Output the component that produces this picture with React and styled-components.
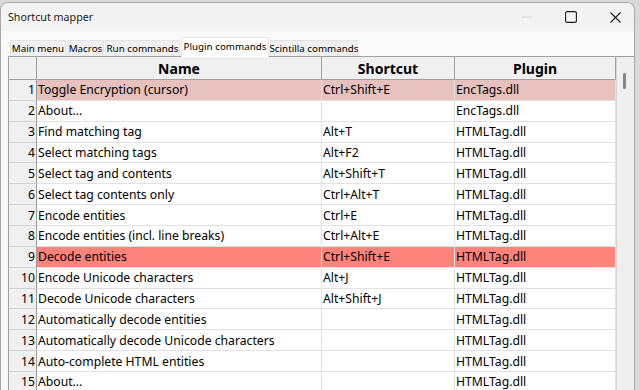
import React from "react";
import styled, { createGlobalStyle } from "styled-components";

const Global = createGlobalStyle`
  html, body { margin: 0; padding: 0; }
  body {
    background: #d9d9d9;
    font-family: "Noto Sans", "Open Sans", sans-serif;
    width: 640px; height: 390px; overflow: hidden;
  }
`;

const Window = styled.div`
  margin: 2px 5px 0 0;
  height: 400px;
  background: #f9f9f9;
  border: 1px solid #a8a8a8;
  border-bottom: none;
  border-radius: 8px 8px 0 0;
  display: flex;
  flex-direction: column;
  overflow: hidden;
`;

const TitleBar = styled.div`
  height: 28px;
  background: #f3f3f3;
  display: flex;
  align-items: center;
  padding: 0 13px 0 7px;
`;

const Title = styled.div`
  flex: 1;
  font-size: 10.7px;
  color: #1b1b1b;
`;

const Controls = styled.div`
  display: flex;
  align-items: center;
  gap: 33px;
`;

const Ctrl = styled.div`
  display: flex;
  align-items: center;
  justify-content: center;
  height: 28px;
`;

const Body = styled.div`
  flex: 1;
  padding: 6px 0 0 7px;
  display: flex;
  flex-direction: column;
`;

const Tabs = styled.div`
  display: flex;
  align-items: flex-end;
  height: 19px;
  padding-left: 2px;
  position: relative;
  z-index: 1;
`;

const Tab = styled.div`
  width: ${(p) => p.$w}px;
  height: ${(p) => (p.$active ? 20 : 16)}px;
  margin-bottom: ${(p) => (p.$active ? -1 : 0)}px;
  margin-right: 1px;
  background: ${(p) => (p.$active ? "#ffffff" : "#f0f0f0")};
  border: 1px solid #e3e3e3;
  border-bottom: none;
  font-size: 9.8px;
  color: #000;
  display: flex;
  align-items: center;
  justify-content: center;
  padding-bottom: ${(p) => (p.$active ? 2 : 0)}px;
  box-sizing: border-box;
  white-space: nowrap;
`;

const Frame = styled.div`
  display: flex;
  width: 626px;
  border: 1px solid #a0a0a0;
  border-right: none;
  background: #fff;
`;

const Table = styled.div`
  display: grid;
  grid-template-columns: 28px 285px 133px 161px;
  grid-template-rows: 23px;
  grid-auto-rows: 20.86px;
  width: 607px;
  align-content: start;
`;

const HeadCell = styled.div`
  background: #f0f0f0;
  border-right: 1px solid #a0a0a0;
  border-bottom: 1px solid #a0a0a0;
  box-sizing: border-box;
  font-weight: 700;
  font-size: 14px;
  display: flex;
  align-items: center;
  justify-content: center;
  color: #000;
`;

const NumCell = styled.div`
  background: #f0f0f0;
  border-right: 1px solid #9a9a9a;
  border-bottom: 1px solid #d0d0d0;
  box-sizing: border-box;
  font-size: 12.2px;
  display: flex;
  align-items: center;
  justify-content: flex-end;
  padding-right: 1px;
  color: #000;
`;

const Cell = styled.div`
  background: ${(p) => p.$bg || "#ffffff"};
  border-right: 1px solid #e2e2e2;
  border-bottom: 1px solid #e2e2e2;
  box-sizing: border-box;
  font-size: 12.2px;
  display: flex;
  align-items: center;
  padding-left: 1px;
  white-space: nowrap;
  overflow: hidden;
  color: #000;
`;

const Scroll = styled.div`
  width: 18px;
  background: #efefef;
  border-left: 1px solid #d6d6d6;
  position: relative;
`;

const Thumb = styled.div`
  position: absolute;
  left: 6px;
  top: 16px;
  width: 3px;
  height: 16px;
  border-radius: 2px;
  background: #858585;
`;

const rows = [
  ["Toggle Encryption (cursor)", "Ctrl+Shift+E", "EncTags.dll", "#e6c1be"],
  ["About...", "", "EncTags.dll"],
  ["Find matching tag", "Alt+T", "HTMLTag.dll"],
  ["Select matching tags", "Alt+F2", "HTMLTag.dll"],
  ["Select tag and contents", "Alt+Shift+T", "HTMLTag.dll"],
  ["Select tag contents only", "Ctrl+Alt+T", "HTMLTag.dll"],
  ["Encode entities", "Ctrl+E", "HTMLTag.dll"],
  ["Encode entities (incl. line breaks)", "Ctrl+Alt+E", "HTMLTag.dll"],
  ["Decode entities", "Ctrl+Shift+E", "HTMLTag.dll", "#fe837a"],
  ["Encode Unicode characters", "Alt+J", "HTMLTag.dll"],
  ["Decode Unicode characters", "Alt+Shift+J", "HTMLTag.dll"],
  ["Automatically decode entities", "", "HTMLTag.dll"],
  ["Automatically decode Unicode characters", "", "HTMLTag.dll"],
  ["Auto-complete HTML entities", "", "HTMLTag.dll"],
  ["About...", "", "HTMLTag.dll"],
];

const tabs = [
  ["Main menu", 56],
  ["Macros", 37],
  ["Run commands", 75],
  ["Plugin commands", 88, true],
  ["Scintilla commands", 88],
];

export default function App() {
  return (
    <>
      <Global />
      <Window>
        <TitleBar>
          <Title>Shortcut mapper</Title>
          <Controls>
            <Ctrl>
              <svg width="10" height="2" viewBox="0 0 10 2">
                <rect x="0" y="0.5" width="10" height="1" fill="#cfcfcf" />
              </svg>
            </Ctrl>
            <Ctrl>
              <svg width="12" height="12" viewBox="0 0 12 12">
                <rect x="0.6" y="0.6" width="10.8" height="10.8" rx="1.5" fill="none" stroke="#1b1b1b" strokeWidth="1.1" />
              </svg>
            </Ctrl>
            <Ctrl>
              <svg width="11" height="11" viewBox="0 0 11 11">
                <path d="M0.5 0.5 L10.5 10.5 M10.5 0.5 L0.5 10.5" stroke="#1b1b1b" strokeWidth="1.1" />
              </svg>
            </Ctrl>
          </Controls>
        </TitleBar>
        <Body>
          <Tabs>
            {tabs.map(([t, w, a]) => (
              <Tab key={t} $w={w} $active={a}>
                {t}
              </Tab>
            ))}
          </Tabs>
          <Frame>
            <Table>
              <HeadCell />
              <HeadCell>Name</HeadCell>
              <HeadCell>Shortcut</HeadCell>
              <HeadCell>Plugin</HeadCell>
              {rows.map((r, i) => (
                <React.Fragment key={i}>
                  <NumCell>{i + 1}</NumCell>
                  <Cell $bg={r[3]}>{r[0]}</Cell>
                  <Cell $bg={r[3]}>{r[1]}</Cell>
                  <Cell $bg={r[3]}>{r[2]}</Cell>
                </React.Fragment>
              ))}
            </Table>
            <Scroll>
              <Thumb />
            </Scroll>
          </Frame>
        </Body>
      </Window>
    </>
  );
}
